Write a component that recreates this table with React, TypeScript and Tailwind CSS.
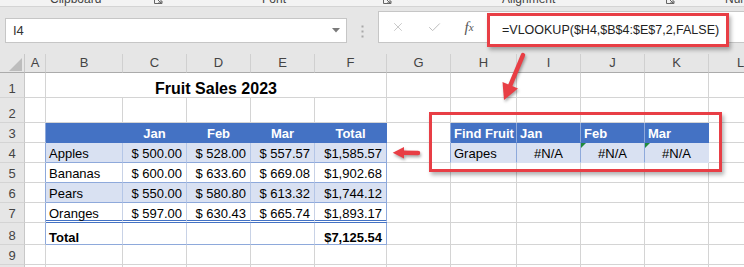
import { X, Check } from 'lucide-react'

type CellSpec = {
  t?: string
  align?: 'l' | 'c' | 'r'
  bold?: boolean
  cls?: string
  pb?: string
  tri?: boolean
  span5?: boolean
  dbl?: boolean
  big?: boolean
}

const COLS = ['A', 'B', 'C', 'D', 'E', 'F', 'G', 'H', 'I', 'J', 'K', 'L']

const EDGE_A = 'bg-white border-r-[#8ea9db] border-b-[#d4d4d4]'
const BLUE = 'bg-[#4472c4] text-white border-r-[#4472c4] border-b-[#4472c4]'
const BLUE_SEP = 'bg-[#4472c4] text-white border-r-[#8ea9db] border-b-[#4472c4]'
const BAND_IN = 'bg-[#d9e1f2] border-r-[#b4c6e7] border-b-[#8ea9db]'
const BAND_END = 'bg-[#d9e1f2] border-r-[#8ea9db] border-b-[#8ea9db]'
const PLAIN_IN = 'bg-white border-r-[#c8d2e6] border-b-[#8ea9db]'
const PLAIN_END = 'bg-white border-r-[#8ea9db] border-b-[#8ea9db]'
const DBL_IN = 'bg-white border-r-[#c8d2e6] border-b-[#4472c4]'
const DBL_END = 'bg-white border-r-[#8ea9db] border-b-[#4472c4]'
const FIND = 'bg-[#d9e1f2] border-r-[#8ea9db] border-b-[#d9e1f2]'
const FIND_END = 'bg-[#d9e1f2] border-r-[#d9e1f2] border-b-[#d9e1f2]'

const empty = (n: number): CellSpec[] => Array.from({ length: n }, () => ({}))

const sales = [
  ['Apples', '$ 500.00', '$ 528.00', '$ 557.57', '$1,585.57'],
  ['Bananas', '$ 600.00', '$ 633.60', '$ 669.08', '$1,902.68'],
  ['Pears', '$ 550.00', '$ 580.80', '$ 613.32', '$1,744.12'],
  ['Oranges', '$ 597.00', '$ 630.43', '$ 665.74', '$1,893.17'],
]

function salesRow(i: number): CellSpec[] {
  const band = i % 2 === 0
  const dbl = i === 3
  return sales[i].map((t, j) => {
    const end = j === 4
    const cls = dbl ? (end ? DBL_END : DBL_IN) : band ? (end ? BAND_END : BAND_IN) : end ? PLAIN_END : PLAIN_IN
    return { t, align: j === 0 ? 'l' : 'r', cls, dbl, pb: dbl ? 'pb-0' : undefined }
  })
}

const rows: CellSpec[][] = [
  [{}, { t: 'Fruit Sales 2023', span5: true, bold: true, align: 'c', big: true, pb: 'pb-0' }, ...empty(6)],
  empty(12),
  [
    { cls: EDGE_A },
    { cls: BLUE },
    { t: 'Jan', align: 'c', bold: true, cls: BLUE },
    { t: 'Feb', align: 'c', bold: true, cls: BLUE },
    { t: 'Mar', align: 'c', bold: true, cls: BLUE },
    { t: 'Total', align: 'c', bold: true, cls: BLUE },
    { cls: EDGE_A },
    { t: 'Find Fruit', bold: true, cls: BLUE_SEP },
    { t: 'Jan', bold: true, cls: BLUE_SEP },
    { t: 'Feb', bold: true, cls: BLUE_SEP },
    { t: 'Mar', bold: true, cls: BLUE },
    {},
  ],
  [
    { cls: EDGE_A },
    ...salesRow(0),
    { cls: EDGE_A },
    { t: 'Grapes', cls: FIND },
    { t: '#N/A', align: 'c', cls: FIND },
    { t: '#N/A', align: 'c', cls: FIND, tri: true },
    { t: '#N/A', align: 'c', cls: FIND_END, tri: true },
    {},
  ],
  [{ cls: EDGE_A }, ...salesRow(1), ...empty(6)],
  [{ cls: EDGE_A }, ...salesRow(2), ...empty(6)],
  [{ cls: EDGE_A }, ...salesRow(3), ...empty(6)],
  [
    { cls: EDGE_A },
    { t: 'Total', bold: true, cls: PLAIN_IN, pb: 'pb-0' },
    { cls: PLAIN_IN },
    { cls: PLAIN_IN },
    { cls: PLAIN_IN },
    { t: '$7,125.54', align: 'r', bold: true, cls: PLAIN_END, pb: 'pb-0' },
    ...empty(6),
  ],
  empty(12),
  empty(12),
]

function Cell({ c }: { c: CellSpec }) {
  const align = c.align === 'r' ? 'justify-end pr-[4px]' : c.align === 'c' ? 'justify-center' : 'pl-[3px]'
  return (
    <div
      className={`relative flex items-end whitespace-nowrap border-r leading-none ${c.dbl ? 'border-b-[3px] border-double' : 'border-b'} ${c.pb ?? 'pb-[2px]'} ${align} ${c.bold ? 'font-bold' : ''} ${c.big ? 'text-[16px]' : ''} ${c.span5 ? 'col-span-5' : ''} ${c.cls ?? 'bg-white border-r-[#d4d4d4] border-b-[#d4d4d4]'}`}
    >
      {c.tri && (
        <span className="absolute left-0 top-0 h-0 w-0 border-r-[5px] border-t-[5px] border-r-transparent border-t-[#1f8a3d]" />
      )}
      {c.t}
    </div>
  )
}

function Launcher({ className }: { className: string }) {
  return (
    <svg className={`shrink-0 ${className}`} width="10" height="10" viewBox="0 0 10 10" fill="none" stroke="#666" strokeWidth="1">
      <path d="M1.5 1v7.5H9V6" />
      <path d="M4 4l4 4M8 5v3H5" />
    </svg>
  )
}

function Ribbon() {
  return (
    <div className="h-[7px] overflow-hidden border-b border-[#d4d4d4] bg-[#f3f3f3]">
      <div className="-mt-[8px] flex items-start text-[12px] leading-[14px] text-[#444]">
        <span className="ml-[50px] w-[51px] shrink-0">Clipboard</span>
        <Launcher className="ml-[52px] mt-[3px]" />
        <span className="ml-[99px] w-[24px] shrink-0">Font</span>
        <Launcher className="ml-[96px] mt-[3px]" />
        <span className="ml-[110px] w-[53px] shrink-0">Alignment</span>
        <Launcher className="ml-[110px] mt-[3px]" />
        <span className="ml-[50px] shrink-0">Number</span>
      </div>
    </div>
  )
}

function FormulaBar() {
  return (
    <div className="flex h-[47px] items-start bg-[#e6e6e6]">
      <div className="ml-[5px] mt-[11px] flex h-[25px] w-[342px] items-center justify-between border border-[#c6c6c6] bg-white pl-[7px] pr-[6px] text-[13px] text-[#333]">
        <span>I4</span>
        <svg width="8" height="5" viewBox="0 0 8 5">
          <polygon points="0,0 8,0 4,4.5" fill="#7a7a7a" />
        </svg>
      </div>
      <svg className="ml-[14px] mt-[18px]" width="3" height="13" viewBox="0 0 3 13">
        <rect x="0.5" y="0.5" width="2" height="2" fill="#a8a8a8" />
        <rect x="0.5" y="5.5" width="2" height="2" fill="#a8a8a8" />
        <rect x="0.5" y="10.5" width="2" height="2" fill="#a8a8a8" />
      </svg>
      <div className="ml-[14px] mt-[4px] flex h-[32px] flex-1 items-center border border-r-0 border-[#c6c6c6] bg-white">
        <span className="flex w-[38px] justify-center">
          <X size={14} strokeWidth={1.4} className="text-[#bdbdbd]" />
        </span>
        <span className="flex w-[34px] justify-center">
          <Check size={15} strokeWidth={1.6} className="text-[#bdbdbd]" />
        </span>
        <span className="flex w-[36px] justify-center font-['Liberation_Serif',serif] text-[15px] italic text-[#555]">
          f<span className="mt-[3px] text-[11px]">x</span>
        </span>
      </div>
    </div>
  )
}

function Sheet() {
  return (
    <div className="grid w-[773px] grid-cols-[25px_21px_77px_64px_64px_64px_72px_64px_66px_64px_64px_64px_64px] grid-rows-[19px_25px_25px_20px_20px_20px_20px_20px_22px_20px_20px]">
      {/* column headers */}
      <div className="relative border-b border-r border-b-[#ababab] border-r-[#c8c8c8] bg-[#e6e6e6]">
        <svg className="absolute left-0 top-0" width="24" height="18" viewBox="0 0 24 18">
          <polygon points="22,4 22,17 9,17" fill="#bdbdbd" />
        </svg>
      </div>
      {COLS.map(c => (
        <div key={c} className="flex items-center justify-center border-b border-r border-b-[#ababab] border-r-[#d0d0d0] bg-[#e6e6e6] text-[13px] text-[#444]">
          {c}
        </div>
      ))}

      {rows.map((row, i) => (
        <div key={i} className="contents">
          <div className="flex items-end justify-center border-b border-r border-b-[#d4d4d4] border-r-[#c8c8c8] bg-[#e6e6e6] pb-[2px] leading-none text-[#444]">
            {i + 1}
          </div>
          {row.map((c, j) => (
            <Cell key={j} c={c} />
          ))}
        </div>
      ))}
    </div>
  )
}

export default function App() {
  return (
    <div className="relative h-[267px] w-[744px] overflow-hidden bg-white font-['Liberation_Sans',Arial,sans-serif] text-[13px] text-black">
      <Ribbon />
      <FormulaBar />
      <Sheet />

      {/* formula callout */}
      <div className="absolute left-[487px] top-[13px] flex h-[34px] w-[242px] items-center whitespace-nowrap border-[3px] border-[#e83e45] bg-white pl-[12px] text-[12.5px] text-[#222] shadow-[2px_3px_4px_rgba(0,0,0,0.3)]">
        =VLOOKUP($H4,$B$4:$E$7,2,FALSE)
      </div>

      {/* lookup table callout */}
      <div className="pointer-events-none absolute left-[429px] top-[112px] h-[60px] w-[293px] border-[3px] border-[#e83e45] shadow-[2px_3px_4px_rgba(0,0,0,0.3)]" />

      <svg
        className="pointer-events-none absolute left-0 top-0 drop-shadow-[1px_2px_1.5px_rgba(0,0,0,0.35)]"
        width="744"
        height="267"
        viewBox="0 0 744 267"
      >
        <line x1="523" y1="55" x2="510" y2="86" stroke="#e83e45" strokeWidth="4.5" strokeLinecap="round" />
        <polygon points="504,100 502.5,82 518,88.5" fill="#e83e45" />
        <line x1="403" y1="152.7" x2="418" y2="153" stroke="#e83e45" strokeWidth="4.5" strokeLinecap="round" />
        <polygon points="392.7,152.7 404,147 404,158.5" fill="#e83e45" />
      </svg>
    </div>
  )
}
